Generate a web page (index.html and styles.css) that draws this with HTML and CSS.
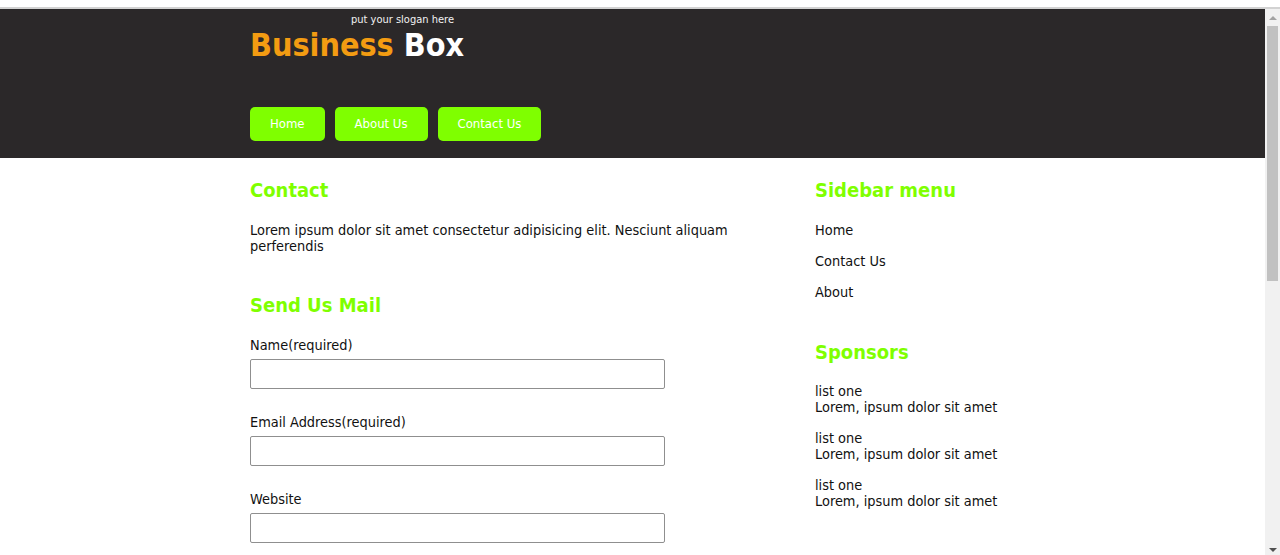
FILE: index.html
```html
<!DOCTYPE html>
<html lang="en">
<head>
<meta charset="utf-8">
<title>Business Box - Contact</title>
<link rel="stylesheet" href="styles.css">
</head>
<body>
<div class="topbar"></div>
<div class="window">
  <div class="page">
    <header class="site-header">
      <div class="container">
        <p class="slogan">put your slogan here</p>
        <h1 class="logo"><span class="logo-main">Business</span> <span class="logo-sub">Box</span></h1>
        <nav class="nav">
          <a class="nav-btn" href="#">Home</a>
          <a class="nav-btn" href="#">About Us</a>
          <a class="nav-btn" href="#">Contact Us</a>
        </nav>
      </div>
    </header>

    <div class="container layout">
      <main class="main">
        <h2 class="heading">Contact</h2>
        <p class="text">Lorem ipsum dolor sit amet consectetur adipisicing elit. Nesciunt aliquam perferendis</p>

        <h2 class="heading spaced-main">Send Us Mail</h2>
        <form class="form">
          <div class="field">
            <label class="label" for="name">Name(required)</label>
            <input class="input" id="name" type="text">
          </div>
          <div class="field">
            <label class="label" for="email">Email Address(required)</label>
            <input class="input" id="email" type="email">
          </div>
          <div class="field">
            <label class="label" for="site">Website</label>
            <input class="input" id="site" type="text">
          </div>
        </form>
      </main>

      <aside class="sidebar">
        <h2 class="heading">Sidebar menu</h2>
        <ul class="side-menu">
          <li><a href="#">Home</a></li>
          <li><a href="#">Contact Us</a></li>
          <li><a href="#">About</a></li>
        </ul>

        <h2 class="heading spaced-side">Sponsors</h2>
        <ul class="sponsors">
          <li>list one<br>Lorem, ipsum dolor sit amet</li>
          <li>list one<br>Lorem, ipsum dolor sit amet</li>
          <li>list one<br>Lorem, ipsum dolor sit amet</li>
        </ul>
      </aside>
    </div>
  </div>

  <div class="scrollbar" aria-hidden="true">
    <div class="sb-btn"><span class="sb-arrow-up"></span></div>
    <div class="sb-track"><div class="sb-thumb"></div></div>
    <div class="sb-btn sb-btn-down"><span class="sb-arrow-down"></span></div>
  </div>
</div>
</body>
</html>
```
FILE: styles.css
```css
html,
body {
  height: 100%;
  overflow: hidden;
}

body {
  margin: 0;
  display: flex;
  flex-direction: column;
  background: #ffffff;
  font-family: "DejaVu Sans Condensed", "DejaVu Sans", sans-serif;
  font-stretch: condensed;
  font-size: 14.4px;
  line-height: 16px;
  color: #111111;
}

/* browser-like top strip */
.topbar {
  flex: none;
  height: 7px;
  border-bottom: 2px solid #d2d2d2;
  background: #ffffff;
}

.window {
  flex: 1;
  min-height: 0;
  display: flex;
}

.page {
  flex: 1;
  min-width: 0;
  overflow: hidden;
}

/* fake classic scrollbar */
.scrollbar {
  flex: none;
  width: 15px;
  display: flex;
  flex-direction: column;
  background: #f1f1f1;
}

.sb-btn {
  flex: none;
  height: 17px;
  display: flex;
  align-items: center;
  justify-content: center;
}

.sb-btn-down {
  height: 17px;
  align-items: flex-end;
  padding-bottom: 3px;
  box-sizing: border-box;
}

.sb-arrow-up {
  width: 0;
  height: 0;
  border-left: 4px solid transparent;
  border-right: 4px solid transparent;
  border-bottom: 4px solid #a3a3a3;
}

.sb-arrow-down {
  width: 0;
  height: 0;
  border-left: 4px solid transparent;
  border-right: 4px solid transparent;
  border-top: 4px solid #505050;
}

.sb-track {
  flex: 1;
  display: flex;
  flex-direction: column;
  padding: 0 2px;
}

.sb-thumb {
  height: 255px;
  background: #c1c1c1;
}

.container {
  width: 765px;
  margin: 0 auto;
}

/* Header */
.site-header {
  background: #2b2829;
  padding: 4px 0 17px;
}

.slogan {
  margin: 0;
  padding-left: 101px;
  font-size: 11px;
  line-height: 13px;
  color: #f2f2f2;
}

.logo {
  margin: 0;
  font-size: 32px;
  line-height: 38px;
  font-weight: bold;
}

.logo-main {
  color: #f39c12;
}

.logo-sub {
  color: #ffffff;
}

.nav {
  display: flex;
  gap: 10px;
  margin-top: 43px;
}

.nav-btn {
  display: block;
  height: 34px;
  line-height: 34px;
  padding: 0 20px;
  background: #7fff00;
  color: #ffffff;
  font-size: 13px;
  text-decoration: none;
  border-radius: 5px;
}

/* Layout */
.layout {
  display: grid;
  grid-template-columns: 540px 1fr;
  column-gap: 25px;
  padding-top: 20px;
}

.heading {
  margin: 0 0 20px;
  font-size: 20px;
  line-height: 24px;
  font-weight: bold;
  color: #7fff00;
}

.spaced-main {
  margin-top: 39px;
}

.spaced-side {
  margin: 40px 0 19px;
}

.text {
  margin: 0;
}

/* Form */
.form {
  display: flex;
  flex-direction: column;
  gap: 25px;
}

.field {
  display: flex;
  flex-direction: column;
  gap: 6px;
}

.label {
  display: block;
}

.input {
  box-sizing: border-box;
  width: 415px;
  height: 30px;
  border: 1px solid #8f8f8f;
  border-radius: 2px;
  background: #ffffff;
  font: inherit;
}

/* Sidebar */
.side-menu,
.sponsors {
  list-style: none;
  margin: 0;
  padding: 0;
  display: flex;
  flex-direction: column;
  gap: 15px;
}

.side-menu a {
  color: #111111;
  text-decoration: none;
}
```
